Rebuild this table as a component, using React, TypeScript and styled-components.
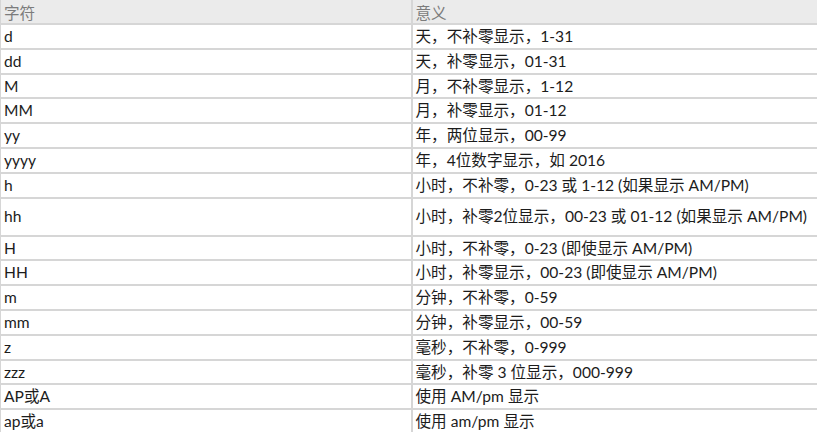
import React from "react";
import styled, { createGlobalStyle } from "styled-components";

const Global = createGlobalStyle`
  html, body { margin: 0; padding: 0; background: #ffffff; }
  body { font-family: "Lato", "Noto Sans CJK SC", sans-serif; }
`;

const Table = styled.table`
  width: 817px;
  border-collapse: collapse;
  table-layout: fixed;
  font-family: "Lato", "Noto Sans CJK SC", sans-serif;
  font-size: 15.6px;
  color: #1c1c1c;
`;

const HeadRow = styled.tr`
  height: 24px;
  background: #ebebeb;
`;

const HeadCell = styled.th`
  text-align: left;
  font-weight: 400;
  color: #7c7c7c;
  padding: 0 0 0 3px;
  border-bottom: 2px solid #d6d6d6;
  border-left: 2px solid #d6d6d6;
  &:first-child { border-left: 1px solid #d6d6d6; }
  white-space: nowrap;
`;

const Row = styled.tr<{ $tall?: boolean }>`
  height: ${(p) => (p.$tall ? "38px" : "24.8px")};
`;

const Cell = styled.td`
  padding: 1px 0 0 3px;
  border-bottom: 2px solid #d6d6d6;
  border-left: 2px solid #d6d6d6;
  &:first-child { border-left: 1px solid #d6d6d6; }
  white-space: nowrap;
  vertical-align: middle;
  line-height: 1;
`;

const rows: [string, string, boolean?][] = [
  ["d", "天，不补零显示，1-31"],
  ["dd", "天，补零显示，01-31"],
  ["M", "月，不补零显示，1-12"],
  ["MM", "月，补零显示，01-12"],
  ["yy", "年，两位显示，00-99"],
  ["yyyy", "年，4位数字显示，如 2016"],
  ["h", "小时，不补零，0-23 或 1-12 (如果显示 AM/PM)"],
  ["hh", "小时，补零2位显示，00-23 或 01-12 (如果显示 AM/PM)", true],
  ["H", "小时，不补零，0-23 (即使显示 AM/PM)"],
  ["HH", "小时，补零显示，00-23 (即使显示 AM/PM)"],
  ["m", "分钟，不补零，0-59"],
  ["mm", "分钟，补零显示，00-59"],
  ["z", "毫秒，不补零，0-999"],
  ["zzz", "毫秒，补零 3 位显示，000-999"],
  ["AP或A", "使用 AM/pm 显示"],
  ["ap或a", "使用 am/pm 显示"],
];

export default function App() {
  return (
    <>
      <Global />
      <Table>
        <colgroup>
          <col style={{ width: 411 }} />
          <col />
        </colgroup>
        <thead>
          <HeadRow>
            <HeadCell>字符</HeadCell>
            <HeadCell>意义</HeadCell>
          </HeadRow>
        </thead>
        <tbody>
          {rows.map(([k, v, tall]) => (
            <Row key={k} $tall={!!tall}>
              <Cell>{k}</Cell>
              <Cell>{v}</Cell>
            </Row>
          ))}
        </tbody>
      </Table>
    </>
  );
}
